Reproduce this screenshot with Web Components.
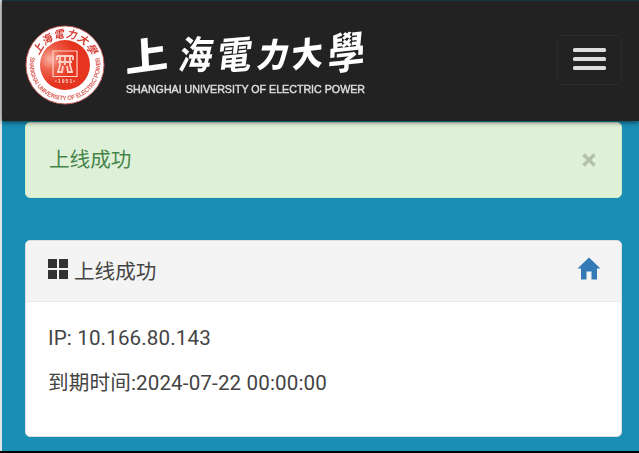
<!DOCTYPE html>
<html lang="zh">
<head>
<meta charset="utf-8">
<title>上线成功</title>
<style>
html,body{margin:0;height:100%;overflow:hidden}
body{font-family:Roboto,"Noto Sans CJK SC",sans-serif;font-size:20.6px;color:#444}
</style>
</head>
<body>
<portal-page>
  <portal-navbar slot="nav"><school-seal></school-seal><school-name></school-name></portal-navbar>
  <portal-alert>上线成功</portal-alert>
  <portal-panel>
    <span slot="title">上线成功</span>
    <info-line>IP: 10.166.80.143</info-line>
    <info-line>到期时间:2024-07-22 00:00:00</info-line>
  </portal-panel>
</portal-page>
<script>
const define = (name, markup) => {
  const template = document.createElement('template');
  template.innerHTML = markup;
  customElements.define(name, class extends HTMLElement {
    constructor() {
      super();
      this.attachShadow({mode: 'open'}).append(template.content.cloneNode(true));
    }
  });
};

define('portal-page', `
<style>
:host{display:flex;flex-direction:column;box-sizing:border-box;width:639px;height:453px;background:linear-gradient(#dfe5e8,#dfe5e8) 0 0/2px 100% no-repeat #1a8fb5;padding-left:2px;border-bottom:2px solid #000}
main{display:flex;flex-direction:column;gap:42px;padding:1px 17px 0 23px}
</style>
<slot name="nav"></slot><main><slot></slot></main>`);

define('portal-navbar', `
<style>
:host{display:flex;box-sizing:border-box;height:121px;flex:none;background:#222;border-top:1px solid #153640;box-shadow:0 1px 5px rgba(0,0,0,.65);position:relative;padding:0 17px 0 22px;align-items:flex-start}
button{all:unset;box-sizing:border-box;width:65px;height:50px;margin:34px 0 0 auto;padding-bottom:2px;border:1px solid #2b2b2b;border-radius:5px;display:flex;flex-direction:column;align-items:center;justify-content:center;gap:5px}
i{width:33px;height:4px;border-radius:1.5px;background:#ddd}
</style>
<slot></slot><button aria-label="menu"><i></i><i></i><i></i></button>`);

define('school-seal', `
<style>:host{display:block;width:82px;height:82px;margin-top:23px}svg{display:block;filter:blur(.4px)}</style>
<svg width="82" height="82" viewBox="-41 -41 82 82">
<defs>
<radialGradient id="shine" cx=".2" cy=".38" r=".5"><stop offset="0" stop-color="#f8b5a7"/><stop offset=".45" stop-color="#ec614b"/><stop offset="1" stop-color="#e5351f"/></radialGradient>
<path id="top" d="M-27.5 0A27.5 27.5 0 0 1 27.5 0"/>
<path id="bottom" d="M-34 -9.2A35.2 35.2 0 1 0 34 -9.2"/>
</defs>
<circle r="39" fill="#fff" stroke="#cf5f5a" stroke-width=".9"/>
<circle r="25" fill="url(#shine)"/>
<text font-family="Noto Sans CJK TC,sans-serif" font-size="10.500" font-weight="bold" font-style="italic" fill="#d74139"><textPath href="#top" startOffset="50%" text-anchor="middle" textLength="67">上海電力大學</textPath></text>
<text font-family="Liberation Sans,sans-serif" font-size="6" fill="#dc655e" stroke="#dc655e" stroke-width=".25"><textPath href="#bottom" startOffset="1" textLength="126" lengthAdjust="spacingAndGlyphs">SHANGHAI UNIVERSITY OF ELECTRIC POWER</textPath></text>
<g fill="none" stroke="#ffd0c6" stroke-width="1.2">
<path d="M-12 -14H12V11.500H-12Z"/>
<path stroke-width="1.8" d="M-8 -9H8M-8 -9V-5M8 -9V-5M-7 -3H7M-5 -8V0L-7 7M0 -9V0M5 -8V0L7 7M-2 1L-3 7M2 1L3 7M-8 7H-2M2 7H8"/>
</g>
<text x="0" y="18" text-anchor="middle" font-family="Liberation Sans,sans-serif" font-weight="bold" font-size="5" fill="#ffd8d0" textLength="20">•1951•</text>
</svg>`);

define('school-name', `
<style>:host{display:block;width:250px;height:98px;margin:8px 0 0 10px}svg{display:block;overflow:visible;filter:blur(.4px)}</style>
<svg width="256" height="98" viewBox="116 9 256 98" fill="#fff">
<g font-family="Noto Sans CJK TC,sans-serif" font-weight="900" text-anchor="middle">
<text transform="translate(147 69.5) rotate(-8) skewX(-5) scale(1.08 .93)" font-size="40">上</text>
<text transform="translate(194 68.5) skewX(-10) scale(.9 1.05)" font-size="37" font-weight="700">海</text>
<text transform="translate(233 69) rotate(-5) skewX(-12) scale(.93 1)" font-size="38" font-weight="700">電</text>
<text transform="translate(271 66.5) skewX(-12) scale(.93 1)" font-size="33">力</text>
<text transform="translate(307 66) rotate(-7) skewX(-8) scale(.95 1)" font-size="33">大</text>
<text transform="translate(346 68.5) rotate(-6) skewX(-8) scale(.93 1.08)" font-size="40" font-weight="700">學</text>
</g>
<text x="126" y="92.500" font-family="Liberation Sans,sans-serif" font-size="11" fill="#ddd" stroke="#ddd" stroke-width=".45" textLength="239" lengthAdjust="spacingAndGlyphs">SHANGHAI UNIVERSITY OF ELECTRIC POWER</text>
</svg>`);

define('portal-alert', `
<style>
:host{display:flex;align-items:center;justify-content:space-between;box-sizing:border-box;height:76px;padding:0 24px 0 23px;background:#dff0d8;border:1px solid #d0e9c6;border-radius:5px;color:#468549}
svg{display:block}
span{padding-bottom:4px}
</style>
<span><slot></slot></span><svg width="16" height="16" viewBox="0 0 16 16" aria-label="close"><path d="M2.500 2.500L13.500 13.500M13.500 2.500L2.500 13.500" stroke="#b2c0ad" stroke-width="3.400"/></svg>`);

define('portal-panel', `
<style>
:host{display:block;box-sizing:border-box;height:197px;background:#fff;border:1px solid #ddd;border-radius:5px;overflow:hidden}
header{display:flex;align-items:center;box-sizing:border-box;height:61px;padding:0 20px 0 22px;background:#f4f4f4;border-bottom:1px solid #e9e9e9;color:#444}
.grid{margin:-4px 6px 0 0}.home{margin:-5px 0 0 auto}
.title{padding-bottom:3px}
section{display:flex;flex-direction:column;gap:15px;padding:21px 22px}
</style>
<header>
<svg class="grid" width="20" height="20" viewBox="0 0 20 20" fill="#333"><path d="M0 0H9V9H0ZM11 0H20V9H11ZM0 11H9V20H0ZM11 11H20V20H11Z"/></svg>
<span class="title"><slot name="title"></slot></span>
<svg class="home" width="24" height="23" viewBox="0 0 24 23" fill="#337ab7"><path d="M12 .5L23.500 11.500H20V22.500H14.500V14.500H9.500V22.500H4V11.500H.5Z"/></svg>
</header>
<section><slot></slot></section>`);

define('info-line', `
<style>:host{display:block;line-height:30px;white-space:nowrap;letter-spacing:.13px}</style><slot></slot>`);
</script>
</body>
</html>
